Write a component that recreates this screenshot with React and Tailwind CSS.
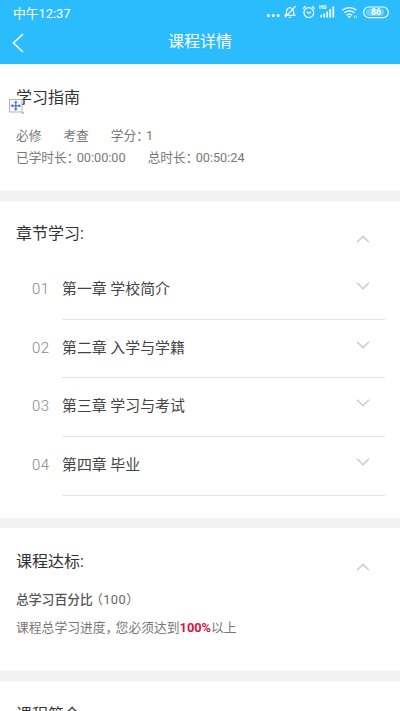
import React from "react";

const chapters = [
  { no: "01", title: "第一章 学校简介" },
  { no: "02", title: "第二章 入学与学籍" },
  { no: "03", title: "第三章 学习与考试" },
  { no: "04", title: "第四章 毕业" },
];

function Chevron({ up }) {
  return (
    <svg width="14" height="8" viewBox="0 0 14 8" fill="none" stroke="#c9c9c9" strokeWidth="1.3" className="shrink-0">
      <path d={up ? "M1 7.2 7 1.2l6 6" : "M1 .8l6 6 6-6"} />
    </svg>
  );
}

function StatusIcons() {
  return (
    <svg width="126" height="18" viewBox="0 0 126 18" fill="none" stroke="#fff">
      <g fill="#fff" stroke="none">
        <circle cx="3.4" cy="11.6" r="1.5" />
        <circle cx="8.3" cy="11.6" r="1.5" />
        <circle cx="13.2" cy="11.6" r="1.5" />
      </g>
      {/* muted bell */}
      <path d="M20.2 11.2h9.6c-1.2-1-1.5-2-1.5-4.3 0-2-1.3-3.2-3.3-3.2s-3.3 1.2-3.3 3.2c0 2.300-.3 3.300-1.500 4.300zM23.700 13.200h2.600M19.800 13.300 30.700 2.200" strokeWidth="1.1" />
      {/* alarm clock */}
      <circle cx="43.8" cy="8.6" r="4.9" strokeWidth="1.2" />
      <path d="M38 4.6l2.6-2.300M49.600 4.600 47 2.300M41.600 7.600l2.200 1.800 2.300-1.800" strokeWidth="1.2" />
      <text x="54" y="5.4" fill="#fff" stroke="none" fontSize="5.5" fontWeight="700" fontFamily="Roboto, sans-serif">HD</text>
      <path d="M56.2 13.400v-2.600M59.200 13.400V9.400M62.200 13.400V7.400M65.200 13.400V5M68.300 13.400V2.600" strokeWidth="1.700" />
      {/* wifi */}
      <path d="M77.300 6.300c4-3.600 10.200-3.600 14.200 0M79.400 8.800c2.900-2.500 7.100-2.500 10 0M81.600 11.200c1.700-1.400 3.900-1.400 5.600 0" strokeWidth="1.300" />
      <path d="M84.400 14.200 82.700 12.300c1-.8 2.400-.8 3.400 0z" fill="#fff" stroke="none" />
      <path d="M89.500 11.500v2.700M91.300 11.500v2.700" strokeWidth=".8" opacity=".8" />
      <rect x="98.700" y="3" width="24.600" height="10.600" rx="5.200" strokeWidth="1.100" />
      <rect x="101" y="4.700" width="18" height="7.200" rx="3.500" fill="#fff" fillOpacity=".3" stroke="none" />
      <text x="111" y="11.400" textAnchor="middle" fill="#fff" stroke="none" fontSize="8.500" fontWeight="700" fontFamily="Roboto, sans-serif">86</text>
    </svg>
  );
}

function MoveHandle() {
  return (
    <svg width="16" height="17" viewBox="0 0 16 17" className="absolute top-[98px] left-[8px]">
      <rect x="1.5" y="1.5" width="12.5" height="12.5" fill="#f7f8fb" stroke="#b5b5b5" />
      <path d="M7.8 3.8v8M3.8 7.8h8" stroke="#4d79bd" strokeWidth="1.3" />
      <path d="M7.8 2.5 9.6 5H6zM7.8 13.1 6 10.6h3.6zM2.5 7.8 5 6v3.6zM13.1 7.8 10.6 9.6V6z" fill="#4d79bd" />
      <path d="M13.500 14.500h2v1.500z" fill="#555" />
    </svg>
  );
}

// half-width CJK punctuation with a little air behind it
function Punct({ children }) {
  return <span className="pr-[3.6px] [font-feature-settings:'halt']">{children}</span>;
}

export default function App() {
  return (
    <div className="relative flex h-[711px] w-[400px] flex-col overflow-hidden bg-white font-['Roboto','Noto_Sans_CJK_SC',sans-serif] whitespace-nowrap">
      <header className="h-16 shrink-0 bg-[#2bbcfe] text-white">
        <div className="flex h-[26px] items-center justify-between pr-[9px] pl-[13px]">
          <span className="pt-px text-[12.8px] leading-[25px]">中午12:37</span>
          <StatusIcons />
        </div>
        <div className="grid h-8 grid-cols-[1fr_auto_1fr] items-center pl-3">
          <svg width="12" height="20" viewBox="0 0 12 20" fill="none" stroke="#fff" strokeWidth="1.6" className="mt-[2px]">
            <path d="M11 1 1.500 10l9.500 9" />
          </svg>
          <h1 className="pr-3 text-[16px] leading-[30px]">课程详情</h1>
        </div>
      </header>

      <section className="h-[127px] shrink-0 pt-[22px] pl-4">
        <h2 className="text-[16px] leading-6 text-[#333]">学习指南</h2>
        <div className="mt-[15px] text-[12.7px] leading-[22px] text-[#777]">
          <div className="flex gap-[22px]">
            <span>必修</span>
            <span>考查</span>
            <span>学分<Punct>：</Punct>1</span>
          </div>
          <div className="flex gap-[22px]">
            <span>已学时长<Punct>：</Punct>00:00:00</span>
            <span>总时长<Punct>：</Punct>00:50:24</span>
          </div>
        </div>
      </section>
      <MoveHandle />

      <section className="h-[326.5px] shrink-0 border-t-[10px] border-[#f2f2f2] pl-4">
        <div className="flex h-[60px] items-start justify-between pt-[21px] pr-[30px]">
          <h2 className="text-[16px] leading-6 text-[#333]">章节学习:</h2>
          <div className="pt-[13px]"><Chevron up /></div>
        </div>
        <ul>
          {chapters.map((c) => (
            <li key={c.no} className="flex h-[58.7px] pl-4">
              <span className="w-[30px] pt-4 text-[15px] leading-6 font-light tracking-[0.4px] text-[#888]">{c.no}</span>
              <div className="flex w-[323px] justify-between border-b border-[#e2e2e2] pt-4 pr-[15px]">
                <span className="text-[14.9px] leading-6 text-[#444]">{c.title}</span>
                <div className="pt-[5px]"><Chevron /></div>
              </div>
            </li>
          ))}
        </ul>
      </section>

      <section className="h-[153px] shrink-0 border-t-[10.500px] border-[#f2f2f2] pl-4">
        <div className="flex items-start justify-between pt-[22px] pr-[30px]">
          <h2 className="text-[16px] leading-6 text-[#333]">课程达标:</h2>
          <div className="pt-[13px]"><Chevron up /></div>
        </div>
        <p className="mt-[15px] text-[12.8px] leading-[22px] text-[#666]">
          <b className="font-medium text-[#555]">总学习百分比</b>
          <span className="pl-[3.5px] tracking-[0.5px] [font-feature-settings:'halt']">（100）</span>
        </p>
        <p className="mt-[6px] text-[12.8px] leading-[22px] text-[#777]">
          课程总学习进度<Punct>，</Punct>您必须达到<b className="font-bold text-[#dc143c]">100%</b>以上
        </p>
      </section>

      <section className="h-[60px] shrink-0 border-t-[10px] border-[#f2f2f2] pt-[22px] pl-4">
        <h2 className="text-[16px] leading-6 text-[#333]">课程简介:</h2>
      </section>
    </div>
  );
}
